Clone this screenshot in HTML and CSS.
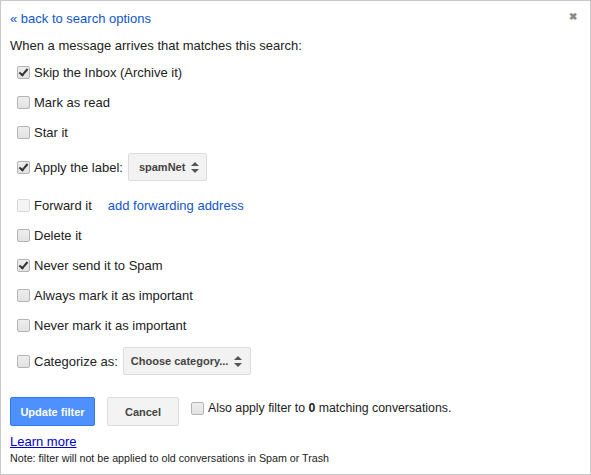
FILE: index.html
```html
<!DOCTYPE html>
<html lang="en">

<head>
    <meta charset="UTF-8">
    <title>Filter</title>
    <link rel="stylesheet" href="styles.css">
</head>

<body>

    <div class="dialog">

        <div class="dialog-head">
            <a href="#" class="back-link">&laquo; back to search options</a>
            <span class="close">&#10006;</span>
        </div>

        <p class="intro">When a message arrives that matches this search:</p>

        <!-- filter actions -->
        <div class="actions">
            <label class="row"><span class="box checked"></span>Skip the Inbox (Archive it)</label>
            <label class="row"><span class="box"></span>Mark as read</label>
            <label class="row"><span class="box"></span>Star it</label>
            <label class="row row-select">
                <span class="box checked"></span>Apply the label:
                <span class="select">spamNet<span class="arrows"></span></span>
            </label>
            <label class="row row-forward">
                <span class="box disabled"></span>Forward it
                <a href="#" class="fwd-link">add forwarding address</a>
            </label>
            <label class="row"><span class="box"></span>Delete it</label>
            <label class="row"><span class="box checked"></span>Never send it to Spam</label>
            <label class="row"><span class="box"></span>Always mark it as important</label>
            <label class="row"><span class="box"></span>Never mark it as important</label>
            <label class="row row-select row-cat">
                <span class="box"></span>Categorize as:
                <span class="select">Choose category...<span class="arrows"></span></span>
            </label>
        </div>

        <div class="buttons">
            <button class="btn btn-blue">Update filter</button>
            <button class="btn btn-gray">Cancel</button>
            <label class="also">
                <span class="box"></span>
                <span>Also apply filter to <b>0</b> matching conversations.</span>
            </label>
        </div>

        <a href="#" class="learn">Learn more</a>
        <p class="note">Note: filter will not be applied to old conversations in Spam or Trash</p>
    </div>

</body>

</html>
```

FILE: styles.css
```css
body {
    margin: 0;
    font-family: Arial, "Liberation Sans", sans-serif;
    font-size: 13px;
    color: #222;
    background-color: #fff;
}

.dialog {
    box-sizing: border-box;
    width: 591px;
    height: 475px;
    border: 1px solid #c8c8c8;
    padding: 0 9px;
}

.dialog-head {
    display: flex;
    justify-content: space-between;
    align-items: center;
    height: 34px;
}

.back-link {
    color: #15c;
    text-decoration: none;
}

.close {
    color: #888;
    font-size: 10px;
    font-weight: bold;
    margin-right: 4px;
    margin-top: -4px;
}

.intro {
    margin: 3px 0 0;
    line-height: 16px;
}

.actions {
    margin-top: 3px;
    padding-left: 7px;
}

.row {
    display: flex;
    align-items: center;
    height: 30px;
}

.row-select {
    height: 36px;
    margin: 2px 0 3px;
}

.row-forward {
    margin-top: 5px;
}

.row-cat {
    margin-top: 3px;
}

.box {
    box-sizing: border-box;
    width: 13px;
    height: 13px;
    border: 1px solid #b4b4b4;
    border-radius: 2px;
    background: linear-gradient(#eee, #e2e2e2);
    margin-right: 4px;
    position: relative;
    flex-shrink: 0;
}

.box.checked::after {
    content: "";
    position: absolute;
    left: 3px;
    top: 0px;
    width: 3px;
    height: 7px;
    border: solid #333;
    border-width: 0 2px 2px 0;
    transform: rotate(40deg);
}

.box.disabled {
    border-color: #d8d8d8;
    background: #f4f4f4;
}

.select {
    display: inline-flex;
    align-items: center;
    box-sizing: border-box;
    height: 28px;
    margin-left: 5px;
    padding: 0 7px 0 10px;
    background-color: #f2f2f2;
    border: 1px solid #dcdcdc;
    border-radius: 2px;
    color: #444;
    font-size: 11px;
    font-weight: bold;
}

.row-cat .select {
    padding-left: 7px;
    padding-right: 8px;
}

.arrows {
    position: relative;
    width: 8px;
    height: 11px;
    margin-left: 6px;
}

.arrows::before,
.arrows::after {
    content: "";
    position: absolute;
    left: 0;
    border-left: 4px solid transparent;
    border-right: 4px solid transparent;
}

.arrows::before {
    top: 0;
    border-bottom: 4px solid #555;
}

.arrows::after {
    bottom: 0;
    border-top: 4px solid #555;
}

.fwd-link {
    color: #15c;
    text-decoration: none;
    margin-left: 16px;
}

.buttons {
    display: flex;
    align-items: flex-start;
    margin-top: 18px;
}

.btn {
    box-sizing: border-box;
    height: 29px;
    border-radius: 2px;
    font-family: Arial, "Liberation Sans", sans-serif;
    font-size: 11px;
    font-weight: bold;
    padding: 0;
}

.btn-blue {
    width: 85px;
    background-color: #4d90fe;
    border: 1px solid #3079ed;
    color: #fff;
}

.btn-gray {
    width: 72px;
    margin-left: 12px;
    background-color: #f3f3f3;
    border: 1px solid #dcdcdc;
    color: #444;
}

.also {
    display: flex;
    align-items: center;
    margin-left: 12px;
    margin-top: 3px;
    font-size: 12.3px;
    line-height: 16px;
}

.learn {
    display: inline-block;
    margin-top: 8px;
    color: #00c;
    line-height: 16px;
}

.note {
    margin: 2px 0 0;
    font-size: 10.7px;
    line-height: 13px;
}
```
